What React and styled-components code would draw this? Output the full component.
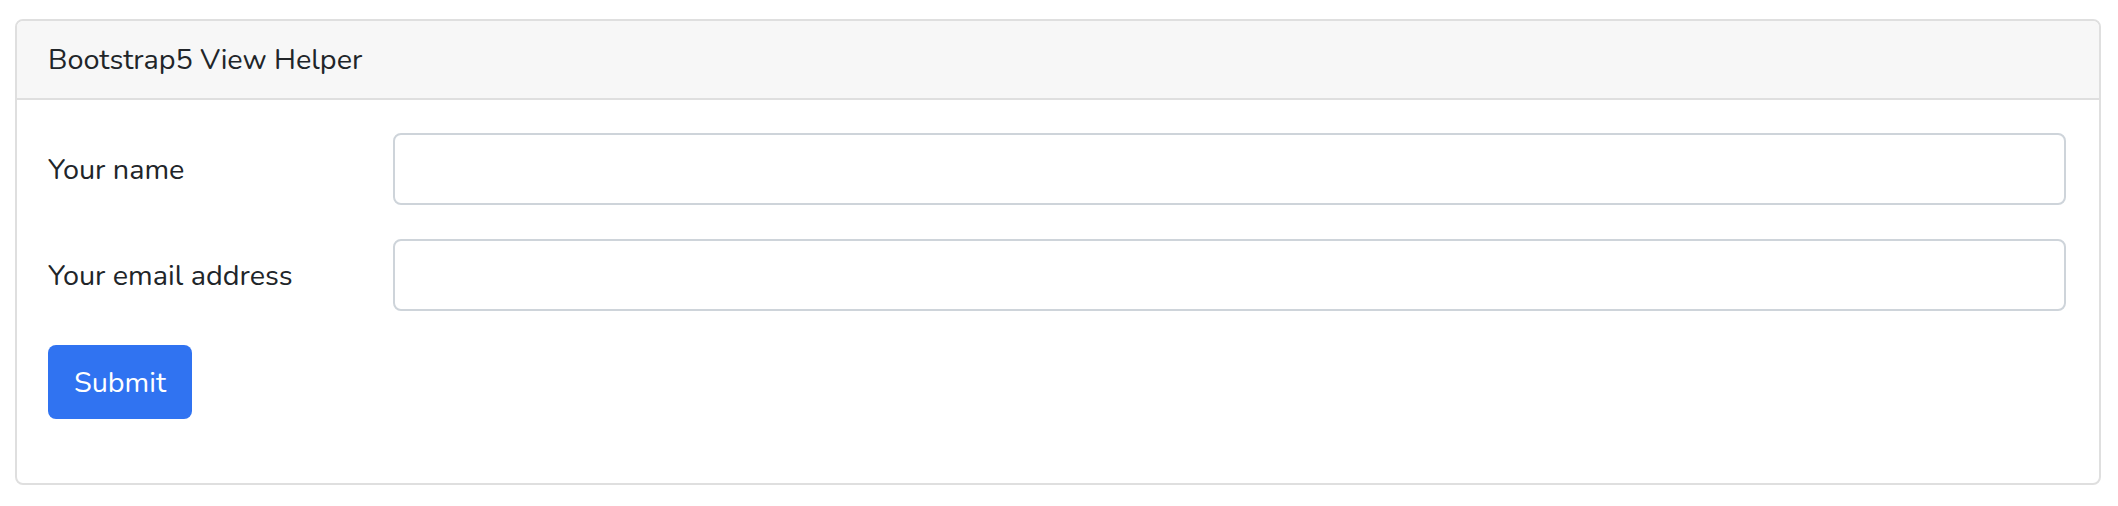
import React from 'react';
import styled, { createGlobalStyle } from 'styled-components';

const GlobalStyle = createGlobalStyle`
  body {
    margin: 0;
    background: #fff;
    font-family: "Nunito", "Open Sans", "Noto Sans", sans-serif;
    color: #212529;
  }
`;

const Page = styled.div`
  padding: 19px 17px 0 15px;
`;

const Card = styled.div`
  border: 2px solid #dfdfdf;
  border-radius: 8px;
  background: #fff;
  overflow: hidden;
`;

const CardHeader = styled.div`
  background: #f7f7f7;
  border-bottom: 2px solid #dfdfdf;
  height: 77px;
  padding: 0 31px;
  display: flex;
  align-items: center;
  font-size: 28.8px;
  color: #212529;
`;

const CardBody = styled.form`
  padding: 33px 33px 64px 31px;
`;

const FormRow = styled.div`
  display: grid;
  grid-template-columns: 345px 1fr;
  align-items: center;
  margin-bottom: 34px;
`;

const Label = styled.label`
  font-size: 28.8px;
  color: #212529;
`;

const Input = styled.input`
  height: 72px;
  box-sizing: border-box;
  width: 100%;
  border: 2px solid #ced4da;
  border-radius: 8px;
  padding: 0 24px;
  font-family: inherit;
  font-size: 28.8px;
  outline: none;
`;

const Button = styled.button`
  height: 74px;
  width: 144px;
  border: none;
  border-radius: 8px;
  background: #3073f1;
  color: #fff;
  font-family: inherit;
  font-size: 28.8px;
  cursor: pointer;
`;

const App = () => (
  <>
    <GlobalStyle />
    <Page>
      <Card>
        <CardHeader>Bootstrap5 View Helper</CardHeader>
        <CardBody onSubmit={e => e.preventDefault()}>
          <FormRow>
            <Label htmlFor="name">Your name</Label>
            <Input id="name" type="text" />
          </FormRow>
          <FormRow>
            <Label htmlFor="email">Your email address</Label>
            <Input id="email" type="email" />
          </FormRow>
          <Button type="submit">Submit</Button>
        </CardBody>
      </Card>
    </Page>
  </>
);

export default App;
